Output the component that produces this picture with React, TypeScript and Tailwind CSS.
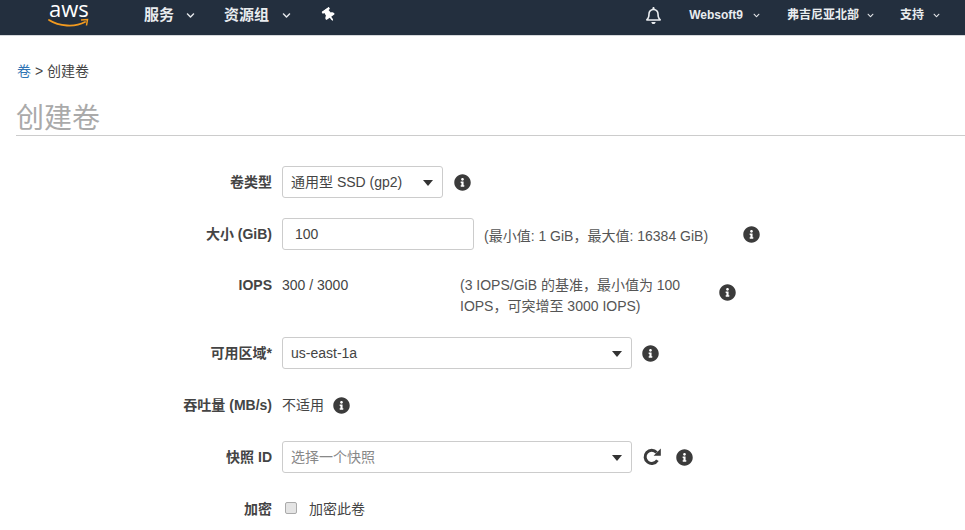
import { FaChevronDown, FaInfoCircle, FaThumbtack, FaRegBell } from "react-icons/fa";

const font = "font-['Liberation_Sans','Noto_Sans_CJK_SC',sans-serif]";

function Info({ className = "" }: { className?: string }) {
  return <FaInfoCircle className={`w-[17px] h-[17px] shrink-0 text-[#3b3b3b] ${className}`} />;
}

function NavCaret({ className = "" }: { className?: string }) {
  return <FaChevronDown className={`text-[#e4e7ea] ${className}`} />;
}

function Label({ children }: { children: React.ReactNode }) {
  return (
    <label className="w-[266px] shrink-0 pr-[10px] text-right text-[14px] font-bold text-[#444]">
      {children}
    </label>
  );
}

function Select({ value, width, muted }: { value: string; width: string; muted?: boolean }) {
  return (
    <div className={`relative h-8 ${width}`}>
      <select
        className={`h-full w-full appearance-none rounded-[3px] border border-[#ccc] bg-white pl-2 text-[14px] ${muted ? "text-[#888]" : "text-[#444]"}`}
        defaultValue={value}
      >
        <option>{value}</option>
      </select>
      <span className="absolute right-[10px] top-[14px] h-0 w-0 border-x-[5.5px] border-t-[6px] border-x-transparent border-t-[#333]" />
    </div>
  );
}

export default function App() {
  return (
    <div className={`h-[530px] w-[965px] overflow-hidden bg-white ${font}`}>
      <header className="flex h-[36px] items-center border-b border-[#d5d8db] bg-[#232f3e] pb-[5px] text-[#e9ecef]">
        <div className="ml-[48px] flex h-[28px] w-[42px] flex-col">
          <span className="pl-[1px] font-['Open_Sans',sans-serif] text-[22px] leading-[14px] text-white">aws</span>
          <svg className="mt-[3px]" width="42" height="11" viewBox="0 0 42 11">
            <path d="M1 2C11 8.5 27 9.5 37 4" fill="none" stroke="#f29a1f" strokeWidth="1.8" strokeLinecap="round" />
            <path d="M33 2L39.5 1.5L38.5 7.5" fill="none" stroke="#f29a1f" strokeWidth="1.5" />
          </svg>
        </div>
        <nav className="ml-[54px] flex items-center text-[15px] font-bold">
          <span>服务</span>
          <NavCaret className="ml-[12px] h-[9px] w-[9px]" />
          <span className="ml-[29px]">资源组</span>
          <NavCaret className="ml-[13px] h-[9px] w-[9px]" />
          <FaThumbtack className="ml-[31px] h-[14px] w-[14px] -rotate-[35deg] text-white" />
        </nav>
        <div className="ml-auto flex items-center text-[12px] font-bold">
          <FaRegBell className="h-[17px] w-[17px]" />
          <span className="ml-[27px]">Websoft9</span>
          <NavCaret className="ml-[10px] h-[7px] w-[7px]" />
          <span className="ml-[27px]">弗吉尼亚北部</span>
          <NavCaret className="ml-[8px] h-[7px] w-[7px]" />
          <span className="ml-[26px]">支持</span>
          <NavCaret className="ml-[9px] mr-[25px] h-[7px] w-[7px]" />
        </div>
      </header>

      <main className="pl-4">
        <div className="mt-[25px] h-5 pl-[1px] text-[14px] leading-5 text-[#444]">
          <span className="text-[#2f74b5]">卷</span> &gt; 创建卷
        </div>
        <h1 className="mt-[18px] border-b border-[#ccc] pt-[4px] text-[28px] leading-[32px] text-[#aaa]">创建卷</h1>

        <form className="mt-[30px] flex flex-col gap-5 text-[14px] text-[#444]">
          <div className="flex h-8 items-center">
            <Label>卷类型</Label>
            <Select value="通用型 SSD (gp2)" width="w-[161px]" />
            <Info className="ml-[11px]" />
          </div>

          <div className="flex h-8 items-center">
            <Label>大小 (GiB)</Label>
            <input
              readOnly
              value="100"
              className="h-8 w-[192px] rounded-[3px] border border-[#ccc] bg-white px-[12px] text-[14px] text-[#444]"
            />
            <span className="ml-[10px] mt-1 text-[#555]">(最小值: 1 GiB，最大值: 16384 GiB)</span>
            <Info className="ml-[35px]" />
          </div>

          <div className="flex h-[47px] items-start pt-[5px] leading-[21px]">
            <Label>IOPS</Label>
            <span className="w-[178px] shrink-0">300 / 3000</span>
            <span className="w-[250px] shrink-0 text-[#555]">
              (3 IOPS/GiB 的基准，最小值为 100
              <br />
              IOPS，可突增至 3000 IOPS)
            </span>
            <Info className="ml-[9px] mt-[9px]" />
          </div>

          <div className="flex h-8 items-center">
            <Label>可用区域*</Label>
            <Select value="us-east-1a" width="w-[350px]" />
            <Info className="ml-[10px]" />
          </div>

          <div className="flex h-8 items-center">
            <Label>吞吐量 (MB/s)</Label>
            <span>不适用</span>
            <Info className="ml-[9px]" />
          </div>

          <div className="flex h-8 items-center">
            <Label>快照 ID</Label>
            <Select value="选择一个快照" width="w-[350px]" muted />
            <svg className="ml-[11px] shrink-0" width="18" height="18" viewBox="0 0 18 18">
              <path d="M14.4 12.2A6.6 6.6 0 1 1 13.6 4.4" fill="none" stroke="#3b3b3b" strokeWidth="3" />
              <path d="M10.6 7.8H17.8V0.6Z" fill="#3b3b3b" />
            </svg>
            <Info className="ml-[15px]" />
          </div>

          <div className="flex h-8 items-center">
            <Label>加密</Label>
            <input
              type="checkbox"
              readOnly
              className="ml-[3px] -mt-[3px] h-3 w-3 appearance-none rounded-[2px] border border-[#aaa] bg-[#e4e4e4]"
            />
            <span className="ml-[12px]">加密此卷</span>
          </div>
        </form>
      </main>
    </div>
  );
}
